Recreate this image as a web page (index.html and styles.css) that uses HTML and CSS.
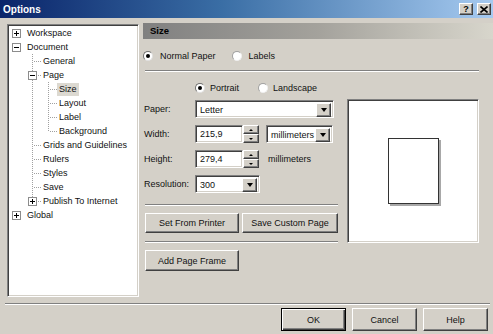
FILE: index.html
```html
<!DOCTYPE html>
<html lang="en">
<head>
  <meta charset="UTF-8" />
  <title>Options</title>
  <link rel="stylesheet" href="styles.css">
</head>
<body>
  <div class="titlebar">
    <span class="title">Options</span>
    <div class="title-btns">
      <span class="tbtn">?</span>
      <span class="tbtn">
        <svg width="8" height="7" viewBox="0 0 8 7"><path d="M0.5 0.5 L7.5 6.5 M7.5 0.5 L0.5 6.5" stroke="#000" stroke-width="1.6"/></svg>
      </span>
    </div>
  </div>

  <div class="main">
    <div class="tree">
      <div class="row"><span class="c"><i class="pm plus"></i></span><span class="lbl">Workspace</span></div>
      <div class="row"><span class="c"><i class="pm"></i></span><span class="lbl">Document</span></div>
      <div class="row"><span class="c"></span><span class="c t"></span><span class="lbl">General</span></div>
      <div class="row"><span class="c"></span><span class="c t"><i class="pm"></i></span><span class="lbl">Page</span></div>
      <div class="row"><span class="c"></span><span class="c v"></span><span class="c t"></span><span class="lbl selected">Size</span></div>
      <div class="row"><span class="c"></span><span class="c v"></span><span class="c t"></span><span class="lbl">Layout</span></div>
      <div class="row"><span class="c"></span><span class="c v"></span><span class="c t"></span><span class="lbl">Label</span></div>
      <div class="row"><span class="c"></span><span class="c v"></span><span class="c l"></span><span class="lbl">Background</span></div>
      <div class="row"><span class="c"></span><span class="c t"></span><span class="lbl">Grids and Guidelines</span></div>
      <div class="row"><span class="c"></span><span class="c t"></span><span class="lbl">Rulers</span></div>
      <div class="row"><span class="c"></span><span class="c t"></span><span class="lbl">Styles</span></div>
      <div class="row"><span class="c"></span><span class="c t"></span><span class="lbl">Save</span></div>
      <div class="row"><span class="c"></span><span class="c l"><i class="pm plus"></i></span><span class="lbl">Publish To Internet</span></div>
      <div class="row"><span class="c"><i class="pm plus"></i></span><span class="lbl">Global</span></div>
    </div>

    <div class="pane">
      <div class="head">Size</div>

      <div class="radios top">
        <span class="radio"><span class="dot on"></span>Normal Paper</span>
        <span class="radio"><span class="dot"></span>Labels</span>
      </div>

      <div class="sep wide"></div>

      <div class="content">
        <div class="form">
          <div class="radios orient">
            <span class="radio"><span class="dot on"></span>Portrait</span>
            <span class="radio"><span class="dot"></span>Landscape</span>
          </div>

          <div class="field first">
            <span class="flabel">Paper:</span>
            <div class="select paper"><span class="val">Letter</span><span class="arrow"></span></div>
          </div>
          <div class="field">
            <span class="flabel">Width:</span>
            <div class="input">215,9</div>
            <div class="spin"><span class="up"></span><span class="down"></span></div>
            <div class="select units"><span class="val">millimeters</span><span class="arrow"></span></div>
          </div>
          <div class="field">
            <span class="flabel">Height:</span>
            <div class="input">279,4</div>
            <div class="spin"><span class="up"></span><span class="down"></span></div>
            <span class="unit-text">millimeters</span>
          </div>
          <div class="field">
            <span class="flabel">Resolution:</span>
            <div class="select res"><span class="val">300</span><span class="arrow"></span></div>
          </div>

          <div class="sep mid"></div>
          <div class="btnrow">
            <button class="btn printer">Set From Printer</button>
            <button class="btn custom">Save Custom Page</button>
          </div>
          <div class="sep mid2"></div>
          <div class="btnrow frame">
            <button class="btn printer">Add Page Frame</button>
          </div>
        </div>

        <div class="preview">
          <div class="page"></div>
        </div>
      </div>
    </div>
  </div>

  <div class="sep bottom"></div>
  <div class="footer">
    <button class="btn dlg default">OK</button>
    <button class="btn dlg">Cancel</button>
    <button class="btn dlg">Help</button>
  </div>
</body>
</html>
```

FILE: styles.css
```css
* {
  box-sizing: border-box;
}

body {
  margin: 0;
  width: 493px;
  height: 334px;
  overflow: hidden;
  background-color: #d4d0c8;
  color: #111;
  font-family: 'Liberation Sans', Arial, sans-serif;
  font-size: 9px;
}

/* title bar */
.titlebar {
  height: 18px;
  display: flex;
  align-items: center;
  padding: 0 2px 0 3px;
  background: linear-gradient(to right, #0a246a, #3a6ea5 45%, #a6caf0);
  color: #fff;
}

.title {
  font-weight: bold;
  font-size: 10px;
}

.title-btns {
  margin-left: auto;
  display: flex;
  gap: 4px;
}

.tbtn {
  width: 14px;
  height: 12px;
  display: flex;
  align-items: center;
  justify-content: center;
  background-color: #d4d0c8;
  border: 1px solid;
  border-color: #fff #404040 #404040 #fff;
  box-shadow: inset -1px -1px #808080;
  color: #000;
  font-weight: bold;
  font-size: 9px;
}

/* main area */
.main {
  height: 285px;
  display: flex;
  gap: 4px;
  padding: 6px 0 0 7px;
}

.tree {
  width: 132px;
  height: 273px;
  background-color: #fff;
  border: 1px solid;
  border-color: #808080 #fff #fff #808080;
  box-shadow: inset 1px 1px #404040, inset -1px -1px #d4d0c8;
  padding: 1px;
}

.row {
  display: flex;
  height: 14px;
  align-items: center;
}

.c {
  --vd: repeating-linear-gradient(to bottom, #a0a0a0 0 1px, transparent 1px 2px);
  --hd: repeating-linear-gradient(to right, #a0a0a0 0 1px, transparent 1px 2px);
  width: 16px;
  height: 14px;
  flex: none;
  display: flex;
  align-items: flex-start;
  padding: 3px 0 0 3px;
}

.c.v {
  background: var(--vd) 7px 0 / 1px 14px no-repeat;
}

.c.t {
  background: var(--vd) 7px 0 / 1px 14px no-repeat,
              var(--hd) 9px 7px / 7px 1px no-repeat;
}

.c.l {
  background: var(--vd) 7px 0 / 1px 8px no-repeat,
              var(--hd) 9px 7px / 7px 1px no-repeat;
}

.pm {
  width: 9px;
  height: 9px;
  border: 1px solid #8c8c8c;
  background: linear-gradient(#000, #000) 1px 3px / 5px 1px no-repeat, #fff;
}

.pm.plus {
  background: linear-gradient(#000, #000) 1px 3px / 5px 1px no-repeat,
              linear-gradient(#000, #000) 3px 1px / 1px 5px no-repeat, #fff;
}

.lbl {
  padding: 0 2px;
  line-height: 13px;
  white-space: nowrap;
}

.lbl.selected {
  background-color: #dcd9d1;
}

/* right pane */
.pane {
  width: 350px;
  margin-top: -1px;
}

.head {
  height: 16px;
  line-height: 16px;
  padding-left: 7px;
  background: linear-gradient(to right, #808080, #a4a29c 50%, #d8d6cc);
  font-weight: bold;
  font-size: 9.5px;
  color: #000;
}

.radios {
  display: flex;
  align-items: center;
  height: 14px;
}

.radios.top {
  margin-top: 10px;
}

.radios.orient {
  margin-top: 9px;
  padding-left: 52px;
}

.radio {
  display: inline-flex;
  align-items: center;
  gap: 7px;
  margin-right: 16px;
}

.orient .radio {
  gap: 5px;
  margin-right: 19px;
}

.dot {
  width: 10px;
  height: 10px;
  border-radius: 50%;
  background-color: #fff;
  border: 1px solid;
  border-color: #a0a0a0 #f0f0f0 #f0f0f0 #a0a0a0;
  display: flex;
  align-items: center;
  justify-content: center;
}

.dot.on {
  border-color: #707070 #e0e0e0 #e0e0e0 #707070;
}

.dot.on::after {
  content: "";
  width: 4px;
  height: 4px;
  border-radius: 50%;
  background-color: #000;
}

.sep {
  height: 2px;
  border-top: 1px solid #808080;
  border-bottom: 1px solid #fff;
}

.sep.wide {
  margin: 7px 14px 0 2px;
}

.content {
  display: flex;
}

.form {
  width: 197px;
}

.field {
  display: flex;
  align-items: center;
  height: 18px;
  margin-top: 7px;
}

.field.first {
  margin-top: 5px;
}

.flabel {
  width: 52px;
  padding-left: 1px;
}

.select,
.input {
  height: 18px;
  background-color: #fff;
  border: 1px solid;
  border-color: #808080 #fff #fff #808080;
  box-shadow: inset 1px 1px #404040, inset -1px -1px #d4d0c8;
  padding: 2px;
  display: flex;
}

.select .val {
  flex: 1;
  padding-left: 2px;
  line-height: 14px;
}

.input {
  width: 48px;
  padding-left: 4px;
  line-height: 12px;
}

.paper {
  width: 139px;
}

.units {
  width: 67px;
  margin-left: 7px;
}

.res {
  width: 65px;
}

.arrow {
  width: 15px;
  height: 14px;
  background-color: #d4d0c8;
  border: 1px solid;
  border-color: #fff #404040 #404040 #fff;
  box-shadow: inset -1px -1px #808080;
  display: flex;
  align-items: center;
  justify-content: center;
}

.arrow::after {
  content: "";
  border-left: 3px solid transparent;
  border-right: 3px solid transparent;
  border-top: 4px solid #000;
}

.spin {
  width: 16px;
  height: 18px;
  display: flex;
  flex-direction: column;
}

.spin span {
  flex: 1;
  background-color: #d4d0c8;
  border: 1px solid;
  border-color: #fff #404040 #404040 #fff;
  box-shadow: inset -1px -1px #808080;
  display: flex;
  align-items: center;
  justify-content: center;
}

.spin .up::after {
  content: "";
  border-left: 2px solid transparent;
  border-right: 2px solid transparent;
  border-bottom: 2px solid #000;
}

.spin .down::after {
  content: "";
  border-left: 2px solid transparent;
  border-right: 2px solid transparent;
  border-top: 2px solid #000;
}

.unit-text {
  margin-left: 9px;
}

.sep.mid {
  margin: 11px 0 0 2px;
  width: 193px;
}

.sep.mid2 {
  margin: 8px 0 0 2px;
  width: 193px;
}

.btnrow {
  display: flex;
  gap: 3px;
  margin: 7px 0 0 2px;
}

.btn {
  height: 20px;
  padding: 0;
  background-color: #d4d0c8;
  border: 1px solid;
  border-color: #fff #404040 #404040 #fff;
  box-shadow: inset -1px -1px #808080;
  font-family: inherit;
  font-size: 9px;
  color: #111;
}

.btn.printer {
  width: 94px;
}

.btn.custom {
  width: 96px;
}

.frame .btn {
  height: 21px;
}

.preview {
  width: 132px;
  height: 144px;
  margin: 27px 0 0 7px;
  background-color: #fff;
  border: 1px solid;
  border-color: #808080 #fff #fff #808080;
  box-shadow: inset 1px 1px #404040, inset -1px -1px #d4d0c8;
  display: flex;
  align-items: center;
  justify-content: center;
}

.page {
  width: 51px;
  height: 66px;
  border: 1px solid #333;
  background-color: #fff;
  box-shadow: 2px 2px 0 #a8a8a8;
}

/* footer */
.sep.bottom {
  margin: 0 3px 0 5px;
}

.footer {
  display: flex;
  justify-content: flex-end;
  gap: 6px;
  margin-top: 3px;
  padding-right: 5px;
}

.btn.dlg {
  width: 65px;
  height: 23px;
}

.btn.default {
  border-color: #000;
  box-shadow: inset 1px 1px #fff, inset -1px -1px #404040, inset -2px -2px #808080;
}
```
